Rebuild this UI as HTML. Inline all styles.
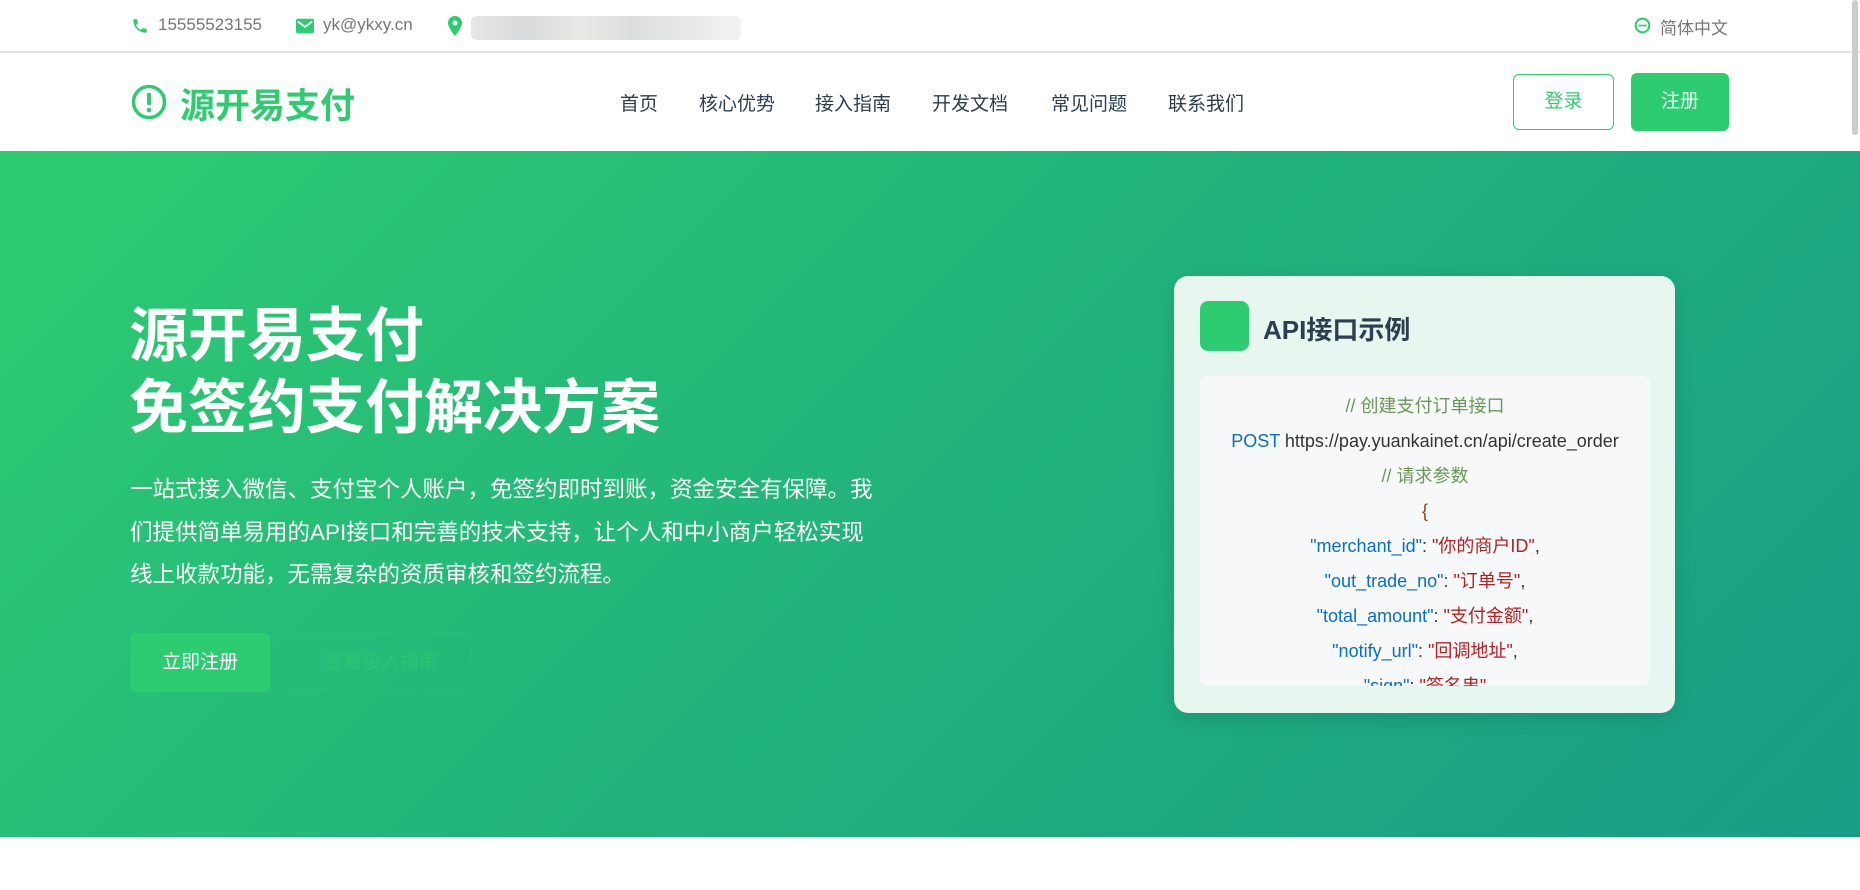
<!DOCTYPE html>
<html><head><meta charset="utf-8"><style>
*{margin:0;padding:0;box-sizing:border-box}
body{width:1860px;height:890px;overflow:hidden;background:#fff;font-family:"Liberation Sans","Noto Sans CJK SC",sans-serif;position:relative}
.abs{position:absolute;white-space:nowrap}
.top{position:absolute;left:0;top:0;width:1860px;height:53px;border-bottom:2px solid #e2e2e2;color:#777;font-size:17px}
.nav a{position:absolute;top:89px;font-size:19px;color:#2c3e50;text-decoration:none}
.hero{position:absolute;left:0;top:151px;width:1860px;height:686px;background:linear-gradient(135deg,#2ecc71 0%,#22b57a 45%,#189d86 100%)}
.code div{height:35px;line-height:35px;text-align:center}
.k{color:#0a6fc2}.s{color:#b22222}.c{color:#6a9955}
</style></head><body>
<div class="top">
<svg class="abs" style="left:131px;top:17px" width="18" height="18" viewBox="0 0 24 24"><path fill="#2ecc71" d="M6.6 10.8c1.4 2.8 3.8 5.1 6.6 6.6l2.2-2.2c.3-.3.7-.4 1-.2 1.1.4 2.3.6 3.6.6.6 0 1 .4 1 1V20c0 .6-.4 1-1 1C10.6 21 3 13.4 3 4c0-.6.4-1 1-1h3.5c.6 0 1 .4 1 1 0 1.3.2 2.5.6 3.6.1.3 0 .7-.2 1z"/></svg>
<span class="abs" style="left:158px;top:15px">15555523155</span>
<svg class="abs" style="left:296px;top:18px" width="18" height="16" viewBox="0 0 20 16"><rect width="20" height="16" rx="2" fill="#2ecc71"/><path d="M2 3l8 6 8-6" stroke="#fff" stroke-width="2" fill="none"/></svg>
<span class="abs" style="left:323px;top:15px">yk@ykxy.cn</span>
<svg class="abs" style="left:448px;top:16px" width="14" height="20" viewBox="0 0 14 20"><path fill="#2ecc71" d="M7 0a7 7 0 0 0-7 7c0 5 7 13 7 13s7-8 7-13a7 7 0 0 0-7-7zm0 9.5A2.5 2.5 0 1 1 7 4.5a2.5 2.5 0 0 1 0 5z"/></svg>
<div class="abs" style="left:471px;top:16px;width:270px;height:24px;background:linear-gradient(90deg,#e6e6e6,#d8dadb,#e9e9e6,#dcdede,#e8e8e8,#f2f2f2);border-radius:6px"></div>
<svg class="abs" style="left:1634px;top:17px" width="17" height="17" viewBox="0 0 20 20"><circle cx="10" cy="10" r="8" stroke="#2ecc71" stroke-width="2.4" fill="none"/><path d="M5 10h10" stroke="#2ecc71" stroke-width="2"/></svg>
<span class="abs" style="left:1660px;top:14px">简体中文</span>
</div>
<div class="abs" style="left:1852px;top:0;width:6px;height:135px;background:#ccc;border-radius:3px"></div>
<svg class="abs" style="left:131px;top:84px" width="36" height="36" viewBox="0 0 36 36"><circle cx="18" cy="18" r="15.5" stroke="#2ecc71" stroke-width="3.5" fill="none"/><rect x="16" y="9" width="4" height="12" rx="1" fill="#2ecc71"/><circle cx="18" cy="26" r="2.3" fill="#2ecc71"/></svg>
<span class="abs" style="left:180px;top:78px;font-size:35px;font-weight:bold;color:#2ecc71">源开易支付</span>
<div class="nav"><a style="left:620px">首页</a><a style="left:699px">核心优势</a><a style="left:815px">接入指南</a><a style="left:932px">开发文档</a><a style="left:1051px">常见问题</a><a style="left:1168px">联系我们</a></div>
<div class="abs" style="left:1513px;top:74px;width:101px;height:56px;border:1.5px solid #2ecc71;border-radius:6px;color:#2ecc71;font-size:19px;text-align:center;line-height:53px">登录</div>
<div class="abs" style="left:1631px;top:73px;width:98px;height:58px;background:#2ecc71;border-radius:6px;color:#fff;font-size:19px;text-align:center;line-height:58px">注册</div>
<div class="hero"></div>
<div class="abs" style="left:129px;top:300px;font-size:59px;font-weight:bold;color:#fff;line-height:72px">源开易支付<br>免签约支付解决方案</div>
<div class="abs" style="left:130px;top:469px;font-size:22.5px;color:#fff;line-height:42.5px">一站式接入微信、支付宝个人账户，免签约即时到账，资金安全有保障。我<br>们提供简单易用的API接口和完善的技术支持，让个人和中小商户轻松实现<br>线上收款功能，无需复杂的资质审核和签约流程。</div>
<div class="abs" style="left:130px;top:633px;width:140px;height:59px;background:#2ecc71;border-radius:6px;color:#fff;font-size:19px;text-align:center;line-height:59px">立即注册</div>
<div class="abs" style="left:290px;top:633px;width:182px;height:59px;border:1px solid rgba(46,204,113,.6);border-radius:6px;color:#2ecc71;opacity:.6;font-size:19px;text-align:center;line-height:57px">查看接入指南</div>
<div class="abs" style="left:1174px;top:276px;width:501px;height:437px;background:#e8f6f0;border-radius:14px;box-shadow:0 6px 20px rgba(0,0,0,.12)"></div>
<div class="abs" style="left:1200px;top:301px;width:49px;height:50px;background:#2ecc71;border-radius:8px"></div>
<span class="abs" style="left:1263px;top:310px;font-size:26px;font-weight:bold;color:#2c3e50">API接口示例</span>
<div class="abs code" style="left:1200px;top:376px;width:450px;height:310px;background:#f6f8fa;border-radius:8px;overflow:hidden;font-size:18px;color:#333;padding-top:13px">
<div class="c">// 创建支付订单接口</div>
<div><span class="k">POST</span> https://pay.yuankainet.cn/api/create_order</div>
<div class="c">// 请求参数</div>
<div style="color:#8b4513">{</div>
<div><span class="k">"merchant_id"</span>: <span class="s">"你的商户ID"</span>,</div>
<div><span class="k">"out_trade_no"</span>: <span class="s">"订单号"</span>,</div>
<div><span class="k">"total_amount"</span>: <span class="s">"支付金额"</span>,</div>
<div><span class="k">"notify_url"</span>: <span class="s">"回调地址"</span>,</div>
<div><span class="k">"sign"</span>: <span class="s">"签名串"</span></div>
</div>
</body></html>
